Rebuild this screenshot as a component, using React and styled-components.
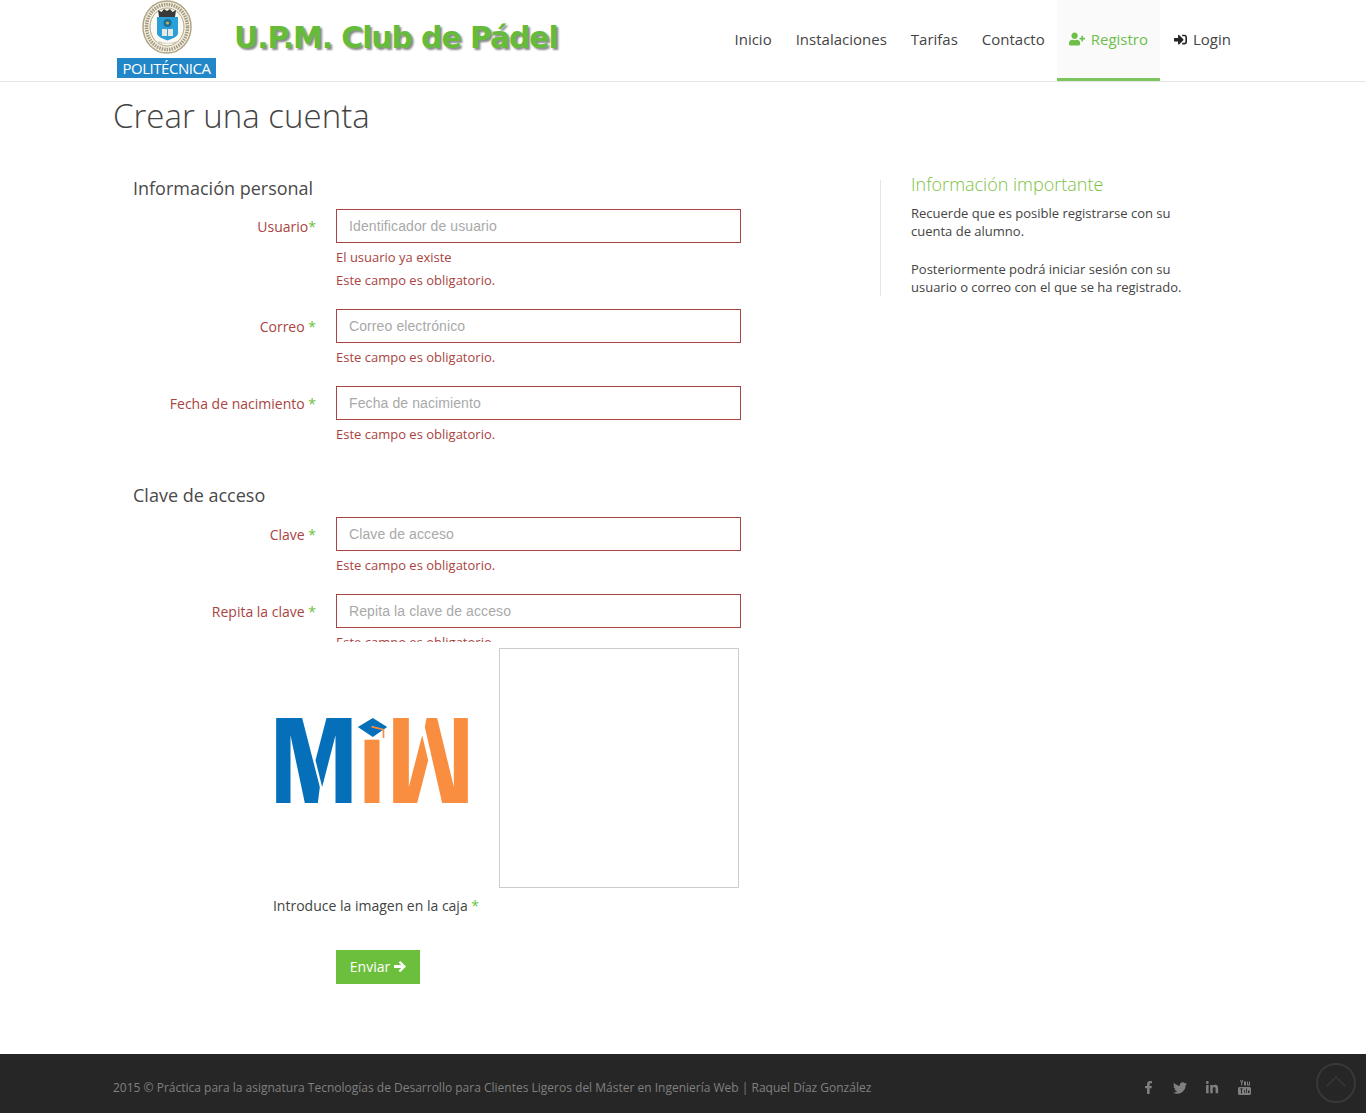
import styled, { createGlobalStyle } from 'styled-components';
import { FaUserPlus, FaSignInAlt, FaFacebookF, FaTwitter, FaLinkedinIn } from 'react-icons/fa';

const GlobalStyle = createGlobalStyle`
  * {
    box-sizing: border-box;
  }

  body {
    margin: 0;
    background: #fff;
    color: #444;
    font-family: "Open Sans", "Liberation Sans", sans-serif;
    font-size: 13px;
  }
`;

const navItems = ['Inicio', 'Instalaciones', 'Tarifas', 'Contacto'];

const CrestLogo = () => (
  <CrestSvg width="56" height="55" viewBox="0 0 56 55">
    <ellipse cx="28" cy="27" rx="24" ry="26" fill="#f5f1e4" stroke="#b0a685" strokeWidth="1.500" />
    <ellipse cx="28" cy="27" rx="20.500" ry="22.500" fill="none" stroke="#a39a80" strokeWidth="3.500" strokeDasharray="1.500 1" />
    <ellipse cx="28" cy="27" rx="17" ry="19" fill="#fbfaf5" stroke="#b0a685" strokeWidth="1" />
    <path d="M19 10l3.500 2 2.500-3 3 2 3-2 2.500 3 3.500-2-1 7H20z" fill="#3a3a38" />
    <path d="M18 17h21v16c0 4-5.500 5.500-10.500 7.500C23.500 38.500 18 37 18 33z" fill="#2ba0d8" />
    <circle cx="28.500" cy="23" r="4" fill="#1d6f96" />
    <circle cx="28.500" cy="23" r="1.600" fill="#c8b04a" />
    <path d="M23 29h5v7h-5zM29 29h5v7h-5z" fill="#e8e8e2" />
    <path d="M19 41c5 2.500 14 2.500 19 0l-1 2.500H20z" fill="#cfc7ad" />
  </CrestSvg>
);

const MiwLogo = () => (
  <svg width="192" height="85" viewBox="47 383 575 255">
    <polygon points="47,383 125,383 178,590 172,638 133,638 90,435 90,638 47,638" fill="#0570b9" />
    <polygon points="198,383 273,383 273,638 225,638 225,435 185,590 165,510" fill="#0570b9" />
    <rect x="312" y="448" width="45" height="190" fill="#f98d40" />
    <polygon points="292,410 337,383 380,410 337,440" fill="#0570b9" />
    <polyline points="333,409 369,418 369,443" fill="none" stroke="#f98d40" strokeWidth="5" />
    <polygon points="398,383 445,383 445,590 485,435 503,510 470,638 398,638" fill="#f98d40" />
    <polygon points="493,410 498,383 530,383 580,590 580,383 622,383 622,638 545,638" fill="#f98d40" />
  </svg>
);

const YoutubeIcon = () => (
  <svg width="13" height="15" viewBox="0 0 13 15" fill="currentColor">
    <path d="M2 0h1l.7 2L4.400 0h1L4.200 3.200V5.500H3.200V3.200zM6 1.500h2v4H6zM9 1.500h1v3h1v-3h1v4H9z" />
    <path d="M1.500 7h10A1.500 1.500 0 0 1 13 8.500v5a1.500 1.500 0 0 1-1.500 1.500h-10A1.500 1.500 0 0 1 0 13.500v-5A1.500 1.500 0 0 1 1.500 7z" />
    <path d="M2 8.500h3v.8H4V13.500H3V9.300H2zM6 10h.8v2.800H6zM8 8.500h.8v4.500H8zM10 10.500h1.500v2.500H10z" fill="#262626" />
  </svg>
);

const ArrowIcon = () => (
  <svg width="12" height="13" viewBox="0 0 13 13" fill="#fff">
    <path d="M6.800 0.500L13 6.500 6.800 12.800 5 11l2.800-2.800H0V4.900h7.800L5 2.300z" />
  </svg>
);

const BackTopIcon = () => (
  <svg width="20" height="12" viewBox="0 0 20 12" fill="none" stroke="#383838" strokeWidth="1.500">
    <polyline points="1,11 10,2 19,11" />
  </svg>
);

const App = () => {
  return (
    <>
      <GlobalStyle />
      <Header>
        <Brand>
          <UniversityLogo>
            <CrestLogo />
            <UniversityName>POLITÉCNICA</UniversityName>
          </UniversityLogo>
          <ClubTitle>U.P.M. Club de Pádel</ClubTitle>
        </Brand>
        <Nav>
          {navItems.map((item) => (
            <NavLink key={item}>{item}</NavLink>
          ))}
          <NavLink $active>
            <FaUserPlus size={16} />
            Registro
          </NavLink>
          <NavLink $spaced>
            <FaSignInAlt size={13} />
            Login
          </NavLink>
        </Nav>
      </Header>

      <Main>
        <PageTitle>Crear una cuenta</PageTitle>
        <Columns>
          <FormColumn>
            <SectionTitle>Información personal</SectionTitle>
            <FieldRow>
              <FieldLabel>Usuario<Required>*</Required></FieldLabel>
              <FieldBody>
                <TextInput placeholder="Identificador de usuario" />
                <ErrorText>El usuario ya existe</ErrorText>
                <ErrorText>Este campo es obligatorio.</ErrorText>
              </FieldBody>
            </FieldRow>
            <FieldRow>
              <FieldLabel>Correo <Required>*</Required></FieldLabel>
              <FieldBody>
                <TextInput placeholder="Correo electrónico" />
                <ErrorText>Este campo es obligatorio.</ErrorText>
              </FieldBody>
            </FieldRow>
            <FieldRow>
              <FieldLabel>Fecha de nacimiento <Required>*</Required></FieldLabel>
              <FieldBody>
                <TextInput placeholder="Fecha de nacimiento" />
                <ErrorText>Este campo es obligatorio.</ErrorText>
              </FieldBody>
            </FieldRow>

            <SectionTitle $spaced>Clave de acceso</SectionTitle>
            <FieldRow>
              <FieldLabel>Clave <Required>*</Required></FieldLabel>
              <FieldBody>
                <TextInput placeholder="Clave de acceso" />
                <ErrorText>Este campo es obligatorio.</ErrorText>
              </FieldBody>
            </FieldRow>
            <FieldRow $clipped>
              <FieldLabel>Repita la clave <Required>*</Required></FieldLabel>
              <FieldBody>
                <TextInput placeholder="Repita la clave de acceso" />
                <ErrorText>Este campo es obligatorio.</ErrorText>
              </FieldBody>
            </FieldRow>

            <CaptchaRow>
              <CaptchaImage>
                <MiwLogo />
              </CaptchaImage>
              <CaptchaBox />
            </CaptchaRow>
            <CaptchaLabel>Introduce la imagen en la caja <Required>*</Required></CaptchaLabel>
            <SubmitButton type="button">
              Enviar
              <ArrowIcon />
            </SubmitButton>
          </FormColumn>

          <SidePanel>
            <SideTitle>Información importante</SideTitle>
            <SideText>Recuerde que es posible registrarse con su cuenta de alumno.</SideText>
            <SideText>Posteriormente podrá iniciar sesión con su usuario o correo con el que se ha registrado.</SideText>
          </SidePanel>
        </Columns>
      </Main>

      <Footer>
        <FooterText>
          2015 © Práctica para la asignatura Tecnologías de Desarrollo para Clientes Ligeros del Máster en Ingeniería Web | Raquel Díaz González
        </FooterText>
        <SocialList>
          <SocialLink><FaFacebookF size={13} /></SocialLink>
          <SocialLink><FaTwitter size={14} /></SocialLink>
          <SocialLink><FaLinkedinIn size={14} /></SocialLink>
          <SocialLink><YoutubeIcon /></SocialLink>
        </SocialList>
        <BackTop><BackTopIcon /></BackTop>
      </Footer>
    </>
  );
};

const Header = styled.header`
  display: flex;
  align-items: stretch;
  justify-content: space-between;
  height: 82px;
  padding: 0 123px 0 117px;
  border-bottom: 1px solid #e6e6e6;
`;

const Brand = styled.div`
  display: flex;
  align-items: flex-start;
  gap: 18px;
`;

const UniversityLogo = styled.div`
  display: flex;
  flex-direction: column;
  align-items: center;
  width: 99px;
`;

const CrestSvg = styled.svg`
  filter: blur(0.4px);
`;

const UniversityName = styled.div`
  width: 100%;
  height: 20px;
  margin-top: 3px;
  background: #2287c8;
  color: #fff;
  font-size: 15px;
  line-height: 20px;
  letter-spacing: -0.45px;
  text-align: center;
`;

const ClubTitle = styled.div`
  margin-top: 18px;
  color: #65bb3a;
  font-family: "DejaVu Sans", sans-serif;
  font-size: 30px;
  font-weight: 700;
  line-height: 40px;
  letter-spacing: -1.15px;
  white-space: nowrap;
  text-shadow: 2px 2px 2px #8a8a8a;
`;

const Nav = styled.nav`
  display: flex;
  align-items: stretch;
`;

const NavLink = styled.a`
  display: flex;
  align-items: center;
  gap: 6px;
  height: 81px;
  margin-left: ${(props) => (props.$spaced ? '2px' : '0')};
  padding: 0 12px;
  color: ${(props) => (props.$active ? '#6cbf4b' : '#444')};
  background: ${(props) => (props.$active ? '#fafafa' : 'transparent')};
  border-bottom: 3px solid ${(props) => (props.$active ? '#7ac55c' : 'transparent')};
  font-size: 15px;
  cursor: pointer;

  svg {
    color: ${(props) => (props.$active ? '#6cbf4b' : '#262626')};
  }
`;

const Main = styled.main`
  padding: 14px 0 70px 113px;
`;

const PageTitle = styled.h1`
  margin: 0 0 41px;
  color: #444;
  font-size: 33px;
  font-weight: 300;
  line-height: 40px;
`;

const Columns = styled.div`
  display: flex;
  align-items: flex-start;
`;

const FormColumn = styled.div`
  width: 767px;
  padding-left: 20px;
`;

const SectionTitle = styled.h3`
  margin: ${(props) => (props.$spaced ? '38px 0 11px' : '0 0 10px')};
  color: #4a4a4a;
  font-size: 18px;
  font-weight: 400;
  line-height: 22px;
`;

const FieldRow = styled.div`
  display: grid;
  grid-template-columns: 183px 405px;
  column-gap: 20px;
  height: ${(props) => (props.$clipped ? '48px' : 'auto')};
  margin-bottom: ${(props) => (props.$clipped ? '0' : '17px')};
  overflow: ${(props) => (props.$clipped ? 'hidden' : 'visible')};
`;

const FieldLabel = styled.label`
  padding-top: 7px;
  color: #a94442;
  font-size: 14px;
  line-height: 22px;
  text-align: right;
`;

const Required = styled.span`
  color: #6cbf3c;
`;

const FieldBody = styled.div`
  display: flex;
  flex-direction: column;
`;

const TextInput = styled.input`
  width: 100%;
  height: 34px;
  margin-bottom: 3px;
  padding: 0 12px;
  border: 1px solid #a94442;
  border-radius: 0;
  outline: none;
  font-family: "Liberation Sans", sans-serif;
  font-size: 14px;
  letter-spacing: 0.1px;

  &::placeholder {
    color: #a9a9a9;
    opacity: 1;
  }
`;

const ErrorText = styled.div`
  color: #a94442;
  font-size: 13px;
  line-height: 23px;
`;

const CaptchaRow = styled.div`
  display: flex;
  gap: 7px;
  padding: 6px 0 0 119px;
`;

const CaptchaImage = styled.div`
  display: flex;
  align-items: center;
  justify-content: center;
  width: 240px;
  height: 240px;
  padding-bottom: 15px;
`;

const CaptchaBox = styled.div`
  width: 240px;
  height: 240px;
  border: 1px solid #ccc;
`;

const CaptchaLabel = styled.div`
  width: 248px;
  margin: 7px 0 33px 119px;
  color: #444;
  font-size: 14px;
  line-height: 22px;
  text-align: center;
  white-space: nowrap;
`;

const SubmitButton = styled.button`
  display: flex;
  align-items: center;
  justify-content: center;
  gap: 4px;
  width: 84px;
  height: 34px;
  margin-left: 203px;
  padding: 0 0 2px;
  border: none;
  border-radius: 0;
  background: #6cbf3c;
  color: #fff;
  font-family: "Open Sans", sans-serif;
  font-size: 14px;
  cursor: pointer;
`;

const SidePanel = styled.aside`
  width: 320px;
  margin-top: 3px;
  padding-left: 30px;
  border-left: 1px solid #e5e5e5;
`;

const SideTitle = styled.h4`
  margin: -8px 0 8px;
  color: #7cbf3f;
  font-size: 18px;
  font-weight: 300;
  line-height: 24px;
`;

const SideText = styled.p`
  width: 280px;
  margin: 0 0 20px;
  color: #444;
  font-size: 13px;
  line-height: 18px;

  &:last-child {
    margin-bottom: 0;
  }
`;

const Footer = styled.footer`
  position: relative;
  display: flex;
  align-items: center;
  justify-content: space-between;
  height: 59px;
  padding: 8px 115px 0 113px;
  background: #262626;
`;

const FooterText = styled.div`
  color: #808080;
  font-size: 12px;
`;

const SocialList = styled.div`
  display: flex;
  align-items: center;
  gap: 18px;
`;

const SocialLink = styled.a`
  display: flex;
  align-items: center;
  justify-content: center;
  width: 14px;
  color: #808080;
`;

const BackTop = styled.div`
  position: absolute;
  right: 10px;
  bottom: 10px;
  display: flex;
  align-items: center;
  justify-content: center;
  width: 40px;
  height: 40px;
  padding-bottom: 4px;
  border: 2px solid #383838;
  border-radius: 50%;
`;

export default App;
